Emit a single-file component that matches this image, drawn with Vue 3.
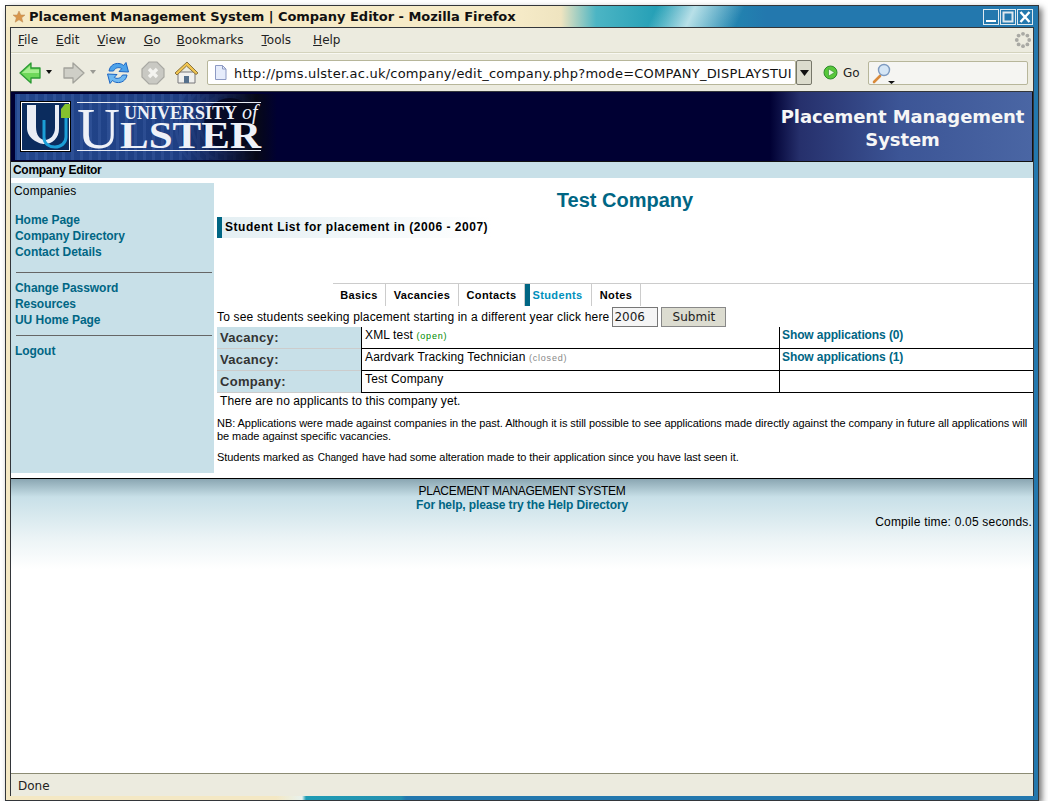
<template>
  <div class="window">
    <div class="titlebar">
      <svg class="star" width="14" height="14" viewBox="0 0 14 14"><path d="M7 1l1.8 4h4.2l-3.3 2.8 1.2 4.4L7 9.800l-3.900 2.400 1.200-4.400L1 5h4.200z" fill="#d9964a" stroke="#b98a5a" stroke-width=".5"/></svg>
      <span class="title-text">Placement Management System | Company Editor - Mozilla Firefox</span>
      <div class="win-btns">
        <span class="win-btn"><svg width="16" height="16" viewBox="0 0 16 16"><rect x="3" y="11" width="10" height="2" fill="#fff"/></svg></span>
        <span class="win-btn"><svg width="16" height="16" viewBox="0 0 16 16"><rect x="3.500" y="3.500" width="9" height="9" fill="none" stroke="#dfe8ee" stroke-width="2"/></svg></span>
        <span class="win-btn"><svg width="16" height="16" viewBox="0 0 16 16"><path d="M3.500 3l9 10M12.500 3l-9 10" stroke="#fff" stroke-width="2.400"/></svg></span>
      </div>
    </div>

    <div class="inner">
      <div class="menubar">
        <span v-for="m in menus" :key="m" class="menu-item"><u>{{ m[0] }}</u>{{ m.slice(1) }}</span>
        <svg class="throbber" width="18" height="18" viewBox="0 0 18 18">
          <circle v-for="d in throbberDots" :key="d.x" :cx="d.x" :cy="d.y" r="1.900" fill="#a9a9a4"/>
        </svg>
      </div>

      <div class="toolbar">
        <svg class="tb-back" width="24" height="24" viewBox="0 0 24 24"><path d="M2 12L13 2v5h9v10h-9v5z" fill="#6fd85a" stroke="#2c9a34" stroke-width="1.300" stroke-linejoin="round"/><path d="M4 12l8-7v3.500h9V12z" fill="#a6ee90"/></svg>
        <svg class="tb-drop" width="8" height="5" viewBox="0 0 8 5"><path d="M1 0h6L4 4z" fill="#111"/></svg>
        <svg class="tb-fwd" width="24" height="24" viewBox="0 0 24 24"><path d="M22 12L11 2v5H2v10h9v5z" fill="#cfcfc7" stroke="#a3a39c" stroke-width="1.300" stroke-linejoin="round"/></svg>
        <svg class="tb-drop second" width="8" height="5" viewBox="0 0 8 5"><path d="M1 0h6L4 4z" fill="#9a9a94"/></svg>
        <svg class="tb-reload" width="24" height="26" viewBox="0 0 24 26">
          <path d="M3 11C4 5 9 3 13 3.500c2 .2 3.500 1 4.500 2L20 2.500l2.500 9.500-9.500-.5 2.700-2.800C14 7 9.500 7 7.500 11z" fill="#4da3ea" stroke="#1c66c4" stroke-width="1"/>
          <path d="M21 15c-1 6-6 8-10 7.500-2-.2-3.500-1-4.500-2L4 23.500 1.500 14l9.500.5-2.700 2.800c1.700 1.700 6.200 1.700 8.200-2.300z" fill="#6fb8f0" stroke="#1c66c4" stroke-width="1"/>
        </svg>
        <svg class="tb-stop" width="24" height="24" viewBox="0 0 24 24"><path d="M8 1h8l7 7v8l-7 7H8l-7-7V8z" fill="#c9c9c3" stroke="#a8a8a2" stroke-width="1.200"/><path d="M8 8l8 8M16 8l-8 8" stroke="#f4f4f0" stroke-width="3.400"/></svg>
        <svg class="tb-home" width="25" height="26" viewBox="0 0 25 26">
          <path d="M4 12v11h17V12z" fill="#f0f0ee" stroke="#77777a" stroke-width="1"/>
          <path d="M1 13L13 2l11 11-2 1.500L12.500 6 3 15z" fill="#f1c550" stroke="#8a7440" stroke-width="1"/>
          <path d="M10 23v-7h5v7z" fill="#55708c"/>
        </svg>
        <div class="urlbar">
          <svg width="13" height="15" viewBox="0 0 13 15"><path d="M1.500.500h7l3.500 3.500v10.500H1.500z" fill="#e6ecfb" stroke="#8d9ac4"/><path d="M8.500.500V4H12" fill="none" stroke="#8d9ac4"/></svg>
          <span class="url-text">http://pms.ulster.ac.uk/company/edit_company.php?mode=COMPANY_DISPLAYSTUI</span>
        </div>
        <span class="url-drop"><svg width="9" height="6" viewBox="0 0 9 6"><path d="M0 0h9L4.500 6z" fill="#111"/></svg></span>
        <svg class="go-icon" width="15" height="15" viewBox="0 0 15 15"><circle cx="7.500" cy="7.500" r="6.500" fill="#58c83a" stroke="#2c8a2a"/><path d="M5.500 3.800v7.400l6-3.700z" fill="#eaf8e0" stroke="#2c8a2a" stroke-width=".6"/></svg>
        <span class="go-text">Go</span>
        <div class="searchbar">
          <svg width="24" height="24" viewBox="0 0 24 24">
            <path d="M3 21l6-6" stroke="#d98a3a" stroke-width="2.600" stroke-linecap="round"/>
            <circle cx="13" cy="9" r="5.500" fill="#d5e6f6" stroke="#7d9ac0" stroke-width="1.400"/>
            <path d="M17 20h7l-3.500 3z" fill="#111"/>
          </svg>
        </div>
      </div>

      <div class="page">
        <header class="banner">
          <svg class="logo" width="262" height="66" viewBox="0 0 262 66">
            <defs>
              <pattern id="waves" width="9" height="66" patternUnits="userSpaceOnUse">
                <rect width="9" height="66" fill="#22468c"/>
                <rect x="2" width="3" height="66" fill="#2f5399"/>
              </pattern>
              <linearGradient id="logofade" x1="0" x2="1">
                <stop offset="0" stop-color="#000033" stop-opacity="0"/>
                <stop offset=".62" stop-color="#000033" stop-opacity=".1"/>
                <stop offset=".92" stop-color="#050510" stop-opacity=".95"/>
                <stop offset="1" stop-color="#000033"/>
              </linearGradient>
            </defs>
            <rect width="262" height="66" fill="url(#waves)"/>
            <circle cx="215" cy="30" r="26" fill="#0a1430"/>
            <circle v-for="r in logoRings" :key="r" cx="215" cy="30" :r="r" fill="none" stroke="#2f5399" stroke-width="3" opacity=".8"/>
            <rect width="262" height="66" fill="url(#logofade)"/>
            <rect x="6.500" y="8.500" width="48" height="48" fill="#0b2c5e" stroke="#fff" stroke-width="1"/>
            <rect x="5.500" y="7.500" width="50" height="50" fill="none" stroke="#000"/>
            <path d="M12 11h9v22c0 8 4 13 9 13s10-5 10-12V11h4v24c0 9-7 15-14 15s-18-6-18-16z" fill="#e9edf5"/>
            <path d="M29 26v17c0 7 5 10 11 10s11-4 11-10V24" fill="none" stroke="#1b9ed6" stroke-width="3"/>
            <path d="M46 24v-9l4-5h5v14z" fill="#86c22e"/>
            <rect x="62" y="8" width="184" height="1" fill="#e8ecf4"/>
            <rect x="62" y="56" width="184" height="1" fill="#e8ecf4"/>
            <text x="62" y="54" class="logo-u" textLength="43" lengthAdjust="spacingAndGlyphs">U</text>
            <text x="109" y="25" class="logo-small" textLength="113" lengthAdjust="spacingAndGlyphs">UNIVERSITY</text>
            <text x="227" y="25" class="logo-of">of</text>
            <text x="105" y="54" class="logo-big" textLength="141" lengthAdjust="spacingAndGlyphs">LSTER</text>
          </svg>
          <div class="banner-title">Placement Management<br>System</div>
        </header>
        <div class="subhead">Company Editor</div>

        <div class="columns">
          <aside class="sidebar">
            <div class="side-label">Companies</div>
            <nav class="side-group first">
              <a v-for="l in nav1" :key="l">{{ l }}</a>
            </nav>
            <hr>
            <nav class="side-group">
              <a v-for="l in nav2" :key="l">{{ l }}</a>
            </nav>
            <hr class="second">
            <nav class="side-group">
              <a>Logout</a>
            </nav>
          </aside>

          <main class="main">
            <h1>Test Company</h1>
            <h2>Student List for placement in (2006 - 2007)</h2>

            <div class="tabs">
              <span v-for="t in tabs" :key="t.name" class="tab" :class="{ active: t.name === 'Students' }" :style="{ width: t.width + 'px' }">{{ t.name }}</span>
            </div>

            <form class="year-form" @submit.prevent>
              <span>To see students seeking placement starting in a different year click here</span>
              <input class="year" value="2006">
              <button class="submit">Submit</button>
            </form>

            <div class="grid">
              <template v-for="r in rows" :key="r.value">
                <div class="c-label">{{ r.label }}</div>
                <div class="c-value">{{ r.value }} <small v-if="r.status" :class="r.status">({{ r.status }})</small></div>
                <div class="c-link"><a v-if="r.link">{{ r.link }}</a></div>
              </template>
            </div>

            <p class="none">There are no applicants to this company yet.</p>
            <p class="note">NB: Applications were made against companies in the past. Although it is still possible to see applications made directly against the company in future all applications will be made against specific vacancies.</p>
            <p class="note second">Students marked as <span class="changed">Changed</span> have had some alteration made to their application since you have last seen it.</p>
          </main>
        </div>

        <footer class="foot">
          <div class="foot-name">PLACEMENT MANAGEMENT SYSTEM</div>
          <a class="foot-help">For help, please try the Help Directory</a>
          <div class="compile">Compile time: 0.05 seconds.</div>
        </footer>
      </div>

      <div class="statusbar">Done</div>
    </div>
  </div>
</template>

<script setup>
const menus = ["File", "Edit", "View", "Go", "Bookmarks", "Tools", "Help"];
const nav1 = ["Home Page", "Company Directory", "Contact Details"];
const nav2 = ["Change Password", "Resources", "UU Home Page"];
const tabs = [
  { name: "Basics", width: 53 },
  { name: "Vacancies", width: 73 },
  { name: "Contacts", width: 66 },
  { name: "Students", width: 67 },
  { name: "Notes", width: 49 },
];
const rows = [
  { label: "Vacancy:", value: "XML test", status: "open", link: "Show applications (0)" },
  { label: "Vacancy:", value: "Aardvark Tracking Technician", status: "closed", link: "Show applications (1)" },
  { label: "Company:", value: "Test Company" },
];
const logoRings = [30, 38, 46, 54];
const throbberDots = [0, 1, 2, 3, 4, 5, 6, 7].map((i) => ({
  x: 9 + 6.2 * Math.cos((i * Math.PI) / 4),
  y: 9 + 6.2 * Math.sin((i * Math.PI) / 4),
}));
</script>

<style>
body {
  background: #fff;
}
</style>

<style scoped>
.window {
  box-sizing: border-box;
  width: 1034px;
  height: 796px;
  margin: 5px 0 0 5px;
  border: 1px solid #33363a;
  box-shadow: 3px 3px 6px rgba(0, 0, 0, 0.55);
  background: linear-gradient(90deg, #f4e8c4 0, #f4e8c4 270px, #e8f2ee 296px, #1f9cb4 300px, #2590b0 395px, #2378ae 400px, #2378ae 100%);
  padding: 0 4px 4px;
  display: flex;
  flex-direction: column;
  font-family: "DejaVu Sans", sans-serif;
}

.titlebar {
  height: 21px;
  margin: 0 -4px;
  padding: 0 4px 0 6px;
  flex: none;
  display: flex;
  align-items: center;
  background:
    linear-gradient(115deg, rgba(255, 255, 255, 0) 590px, rgba(235, 250, 250, 0.75) 625px, rgba(255, 255, 255, 0) 670px),
    linear-gradient(90deg, #f6ebc8 0, #f6ebc8 510px, #efe4c0 555px, #4cb5c4 590px, #1f9cb4 660px, #2378ae 760px, #2378ae 100%);
}

.star {
  flex: none;
  margin-right: 3px;
}

.title-text {
  font-weight: bold;
  font-size: 13px;
  letter-spacing: -0.03px;
  color: #111;
  white-space: nowrap;
}

.win-btns {
  margin-left: auto;
  display: flex;
  gap: 1px;
  margin-right: 1px;
}

.win-btn {
  box-sizing: border-box;
  width: 16px;
  height: 16px;
  display: block;
  outline: 1px solid #dfeaf0;
  outline-offset: -1px;
}

.inner {
  flex: 1;
  min-height: 0;
  display: flex;
  flex-direction: column;
  border-top: 1px solid #33363a;
  border-left: 1px solid #33363a;
  border-right: 1px solid #33363a;
  background: #ecebdf;
}

.menubar {
  height: 24px;
  flex: none;
  display: flex;
  align-items: center;
  gap: 18px;
  padding: 0 1px 0 7px;
  font-size: 12px;
  color: #222;
  border-bottom: 1px solid #d4d3bd;
}

.menu-item:nth-child(4) {
  margin-right: -2px;
}

.menu-item:nth-child(6) {
  margin-right: 4px;
}

.throbber {
  margin-left: auto;
}

.toolbar {
  height: 37px;
  flex: none;
  display: flex;
  align-items: center;
  padding: 0 5px 0 7px;
  font-size: 12px;
  border-top: 1px solid #f8f8f2;
}

.tb-drop {
  margin: 0 9px 0 3px;
}

.tb-drop.second {
  margin-right: 8px;
}

.tb-reload {
  margin: 0 11px 0 1px;
}

.tb-stop {
  margin-right: 9px;
}

.tb-home {
  margin-right: 8px;
}

.urlbar {
  box-sizing: border-box;
  width: 589px;
  height: 25px;
  display: flex;
  align-items: center;
  gap: 7px;
  padding-left: 6px;
  background: #fff;
  border: 1px solid #b7b69a;
  border-radius: 2px;
  overflow: hidden;
  white-space: nowrap;
  color: #111;
  font-size: 13px;
}

.url-text {
  letter-spacing: 0.22px;
  padding-top: 1px;
}

.url-drop {
  box-sizing: border-box;
  width: 16px;
  height: 25px;
  display: flex;
  align-items: center;
  justify-content: center;
  background: #dcdccd;
  border: 1px solid #77776a;
  border-radius: 2px;
}

.go-icon {
  margin-left: 11px;
}

.go-text {
  margin-left: 5px;
  color: #222;
}

.searchbar {
  box-sizing: border-box;
  width: 160px;
  height: 24px;
  margin-left: 8px;
  background: #f5f5f2;
  border: 1px solid #b7b69a;
  border-radius: 2px;
  display: flex;
  align-items: center;
  padding-left: 2px;
}

.page {
  flex: 1;
  min-height: 0;
  background: #fff;
  display: flex;
  flex-direction: column;
  font-family: "Liberation Sans", Arial, sans-serif;
  font-size: 12px;
  color: #000;
  border-top: 1px solid #33363a;
}

.banner {
  height: 70px;
  flex: none;
  display: flex;
  justify-content: space-between;
  background: #000033;
  border-bottom: 1px solid #111;
  padding: 2px 0 0 4px;
  box-sizing: border-box;
  border-right: 1px solid #111;
}

.logo-u,
.logo-small,
.logo-big,
.logo-of {
  font-family: "Liberation Serif", serif;
  fill: #eef1f8;
}

.logo-u {
  font-size: 58px;
}

.logo-small {
  font-size: 18px;
  font-weight: bold;
}

.logo-big {
  font-size: 37px;
  font-weight: bold;
}

.logo-of {
  font-size: 20px;
  font-style: italic;
}

.banner-title {
  box-sizing: border-box;
  width: 262px;
  margin: -2px 0 0;
  padding: 13px 0 0 3px;
  text-align: center;
  background: linear-gradient(90deg, #000033 0, #26306c 30px, #3c5596 130px, #4a66a4 100%);
  color: #f6f6f6;
  font-family: "DejaVu Sans", sans-serif;
  font-weight: bold;
  font-size: 18px;
  letter-spacing: -0.1px;
  line-height: 23px;
}

.subhead {
  height: 16px;
  flex: none;
  padding-left: 2px;
  background: #c8e0e8;
  font-weight: bold;
  font-size: 12px;
  line-height: 16px;
  letter-spacing: -0.3px;
}

.columns {
  flex: none;
  display: flex;
  height: 301px;
  border-bottom: 1px solid #000;
  box-sizing: border-box;
}

.sidebar {
  box-sizing: border-box;
  width: 203px;
  height: 290px;
  margin-top: 5px;
  flex: none;
  background: #c8e0e8;
  padding: 1px 0 0 3px;
}

.side-label {
  line-height: 15px;
  letter-spacing: 0.2px;
  font-size: 12px;
}

.side-group {
  display: flex;
  flex-direction: column;
  padding-left: 1px;
}

.side-group.first {
  margin-top: 13px;
}

.side-group a {
  font-weight: bold;
  color: #006684;
  line-height: 16px;
  letter-spacing: -0.05px;
}

.sidebar hr {
  height: 1px;
  border: 0;
  margin: 12px 0 7px 2px;
  width: 196px;
  background: #666;
}

.sidebar hr.second {
  margin: 7px 0 7px 2px;
}

.main {
  flex: 1;
  min-width: 0;
  padding-left: 3px;
  box-sizing: border-box;
}

h1 {
  margin: 11px 0 0;
  text-align: center;
  font-size: 20px;
  line-height: 23px;
  color: #006684;
}

h2 {
  box-sizing: border-box;
  margin: 5px 0 0;
  width: 275px;
  height: 21px;
  padding-left: 3px;
  border-left: 5px solid #006684;
  background: linear-gradient(90deg, #e4eff3, #fff);
  font-size: 12px;
  line-height: 21px;
  letter-spacing: 0.52px;
}

.tabs {
  display: flex;
  margin: 45px 0 0 116px;
  height: 22px;
  border-top: 1px solid #ccc;
}

.tab {
  box-sizing: border-box;
  text-align: center;
  font-weight: bold;
  font-size: 11px;
  line-height: 22px;
  letter-spacing: 0.36px;
  border-right: 1px solid #ccc;
}

.tab.active {
  color: #0090bc;
  border-left: 5px solid #006684;
  padding-right: 6px;
}

.year-form {
  display: flex;
  align-items: center;
  height: 21px;
  letter-spacing: 0.17px;
}

.year {
  box-sizing: border-box;
  width: 46px;
  height: 20px;
  margin-left: 3px;
  padding: 0 1px;
  border: 1px solid #777;
  background: #f5f5f5;
  font-family: "DejaVu Sans", sans-serif;
  font-size: 12px;
  color: #222;
}

.submit {
  box-sizing: border-box;
  width: 65px;
  height: 20px;
  margin-left: 3px;
  padding: 0;
  border: 1px solid #888;
  background: #dcdcd0;
  font-family: "DejaVu Sans", sans-serif;
  font-size: 12px;
  color: #222;
}

.grid {
  display: grid;
  grid-template-columns: 144px 418px 1fr;
  grid-auto-rows: 22px;
}

.c-label {
  background: #c8e0e8;
  border-bottom: 1px solid #ccc;
  color: #333;
  font-weight: bold;
  font-size: 13px;
  line-height: 22px;
  padding-left: 3px;
  letter-spacing: 0.3px;
}

.c-value,
.c-link {
  border-left: 1px solid #000;
  border-bottom: 1px solid #000;
  padding-left: 3px;
  line-height: 17px;
  letter-spacing: 0.14px;
}

.c-link {
  padding-left: 2px;
  line-height: 16px;
  letter-spacing: -0.1px;
}

.c-link a {
  color: #006684;
  font-weight: bold;
}

small {
  font-size: 9px;
  letter-spacing: 0.8px;
}

small.open {
  color: #008a00;
}

small.closed {
  color: #888;
}

.none {
  margin: 1px 0 0 3px;
  line-height: 15px;
  letter-spacing: 0.1px;
}

.note {
  margin: 8px 0 0;
  font-size: 11px;
  line-height: 13px;
  width: 817px;
  letter-spacing: -0.06px;
}

.note.second {
  margin-top: 8px;
}

.changed {
  font-size: 10px;
  margin: 0 1px;
}

.foot {
  flex: 1;
  position: relative;
  background: linear-gradient(180deg, #8aa6b2 0, #c8e0e8 18px, #ecf4f6 60px, #fff 90px);
  text-align: center;
}

.foot-name {
  margin-top: 5px;
  line-height: 14px;
  letter-spacing: -0.3px;
}

.foot-help {
  display: block;
  font-weight: bold;
  color: #006684;
  line-height: 14px;
  letter-spacing: -0.12px;
}

.compile {
  margin: 3px 1px 0 0;
  text-align: right;
  line-height: 15px;
  letter-spacing: 0.2px;
}

.statusbar {
  height: 23px;
  flex: none;
  box-sizing: border-box;
  border-top: 1px solid #8c8c74;
  padding: 1px 0 0 7px;
  background: #ecebdf;
  font-size: 12px;
  line-height: 22px;
  color: #222;
}
</style>
